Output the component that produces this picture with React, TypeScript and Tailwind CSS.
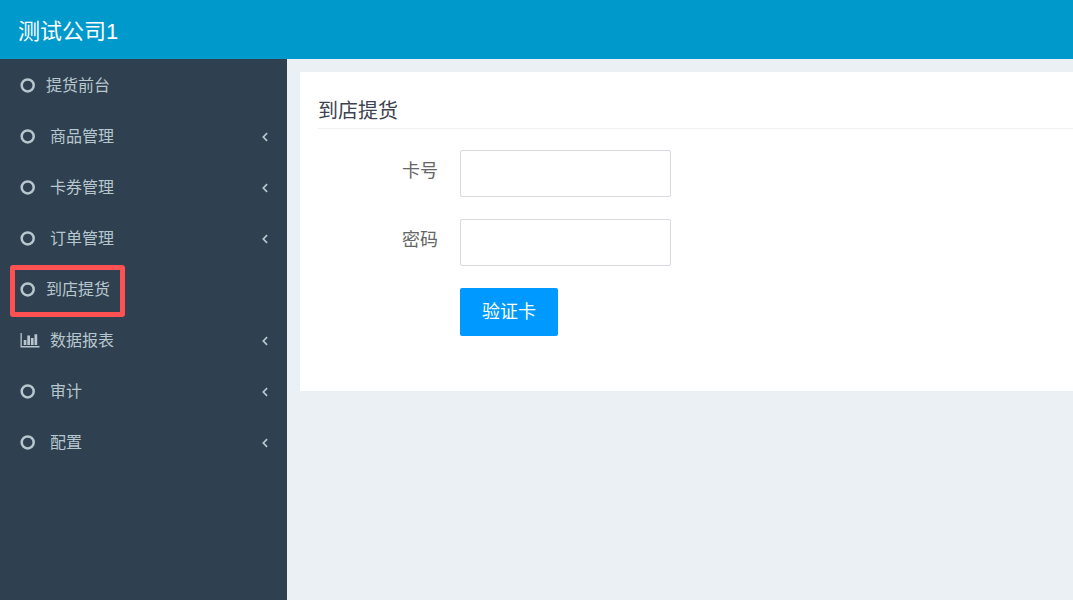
import React, { useState } from 'react';

interface MenuItem {
  label: string;
  icon: 'circle' | 'chart';
  hasChildren: boolean;
  highlighted?: boolean;
}

const menuItems: MenuItem[] = [
  { label: '提货前台', icon: 'circle', hasChildren: false },
  { label: '商品管理', icon: 'circle', hasChildren: true },
  { label: '卡券管理', icon: 'circle', hasChildren: true },
  { label: '订单管理', icon: 'circle', hasChildren: true },
  { label: '到店提货', icon: 'circle', hasChildren: false, highlighted: true },
  { label: '数据报表', icon: 'chart', hasChildren: true },
  { label: '审计', icon: 'circle', hasChildren: true },
  { label: '配置', icon: 'circle', hasChildren: true },
];

const CircleIcon = () => (
  <svg className="h-[15px] w-[15px]" viewBox="0 0 15 15" fill="none" aria-hidden="true">
    <circle cx="7.7" cy="7.4" r="6" stroke="currentColor" strokeWidth="2.5" />
  </svg>
);

const ChartIcon = () => (
  <svg className="h-[15px] w-[20px]" viewBox="0 0 20 15" fill="currentColor" aria-hidden="true">
    <path d="M.5 0h1.3v13H19.5v1.4H.5z" />
    <path d="M3.7 7h2.7v5H3.7zM7.3 2.6H10V12H7.3zM10.9 5h2.7v7h-2.7zM14.5 1.2h2.7V12h-2.7z" />
  </svg>
);

const ChevronIcon = () => (
  <svg className="h-[10px] w-[6px]" viewBox="0 0 6 10" fill="none" aria-hidden="true">
    <path d="M5.1 1.1 1.3 5l3.8 3.9" stroke="currentColor" strokeWidth="1.7" />
  </svg>
);

const SidebarItem: React.FC<{ item: MenuItem }> = ({ item }) => (
  <li className="relative">
    <a
      href="#"
      className="flex h-[51px] items-center pr-[19px] pl-5 text-[16px] text-[#b8c7ce] hover:text-white"
    >
      <span className={item.hasChildren ? 'w-[30px]' : 'w-[26px]'}>
        {item.icon === 'chart' ? <ChartIcon /> : <CircleIcon />}
      </span>
      <span className="flex-1">{item.label}</span>
      {item.hasChildren && <ChevronIcon />}
    </a>
    {item.highlighted && (
      <div className="pointer-events-none absolute top-px left-2.5 h-[52px] w-[115px] rounded-[3px] border-5 border-[#ff5151]" />
    )}
  </li>
);

const inputClass =
  'h-[47px] w-[211px] rounded-[2px] border border-[#d9d9e0] bg-white px-3 text-[18px] text-[#555] focus:border-[#0099ff] focus:outline-none';

const App: React.FC = () => {
  const [cardNo, setCardNo] = useState('');
  const [password, setPassword] = useState('');

  return (
    <div className="flex min-h-screen flex-col bg-[#ebf0f4] font-['Liberation_Sans','Noto_Sans_CJK_SC',sans-serif]">
      <header className="flex h-[59px] items-center bg-[#0099cc] px-[18px] pt-1">
        <h1 className="text-[22px] text-white">测试公司1</h1>
      </header>

      <div className="flex flex-1">
        {/* Sidebar */}
        <nav className="w-[287px] shrink-0 bg-[#2f4050] pt-px">
          <ul>
            {menuItems.map(item => (
              <SidebarItem key={item.label} item={item} />
            ))}
          </ul>
        </nav>

        {/* Content */}
        <main className="min-w-0 flex-1 pt-[13px] pl-[13px]">
          <section className="bg-white pt-6 pb-[55px] pl-[18px]">
            <h2 className="border-b border-[#f0f1f4] pb-0.5 text-[20px] leading-[30px] text-[#3d4350]">
              到店提货
            </h2>

            <form
              className="mt-[21px] flex flex-col gap-[22px]"
              onSubmit={e => e.preventDefault()}
            >
              <div className="flex gap-[22px]">
                <label htmlFor="card-no" className="w-[120px] pt-2 text-right text-[18px] text-[#666]">
                  卡号
                </label>
                <input
                  id="card-no"
                  type="text"
                  value={cardNo}
                  onChange={e => setCardNo(e.target.value)}
                  className={inputClass}
                />
              </div>

              <div className="flex gap-[22px]">
                <label htmlFor="password" className="w-[120px] pt-2 text-right text-[18px] text-[#666]">
                  密码
                </label>
                <input
                  id="password"
                  type="password"
                  value={password}
                  onChange={e => setPassword(e.target.value)}
                  className={inputClass}
                />
              </div>

              <div className="pl-[142px]">
                <button
                  type="submit"
                  className="block h-12 w-[98px] rounded-[2px] bg-[#0099ff] text-[18px] text-white hover:bg-[#0088e6]"
                >
                  验证卡
                </button>
              </div>
            </form>
          </section>
        </main>
      </div>
    </div>
  );
};

export default App;
